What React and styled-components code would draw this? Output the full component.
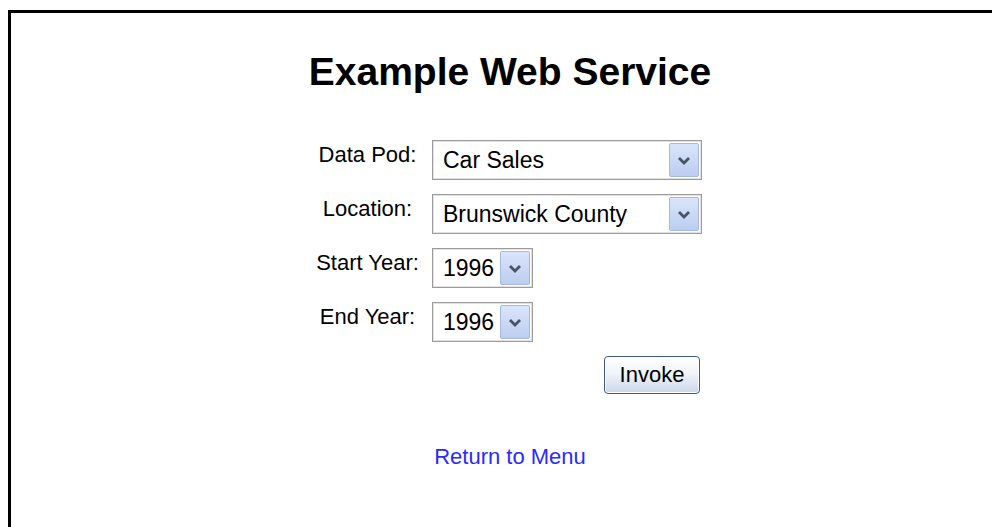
import React from "react";
import styled, { createGlobalStyle } from "styled-components";

const GlobalStyle = createGlobalStyle`
  html, body {
    margin: 0;
    padding: 0;
    background: #ffffff;
    overflow: hidden;
  }
  body {
    font-family: "Liberation Sans", Arial, sans-serif;
    color: #000000;
  }
`;

const Page = styled.div`
  padding: 10px 0 0 8px;
`;

/* the bordered box runs off the right and bottom of the window */
const Frame = styled.div`
  box-sizing: border-box;
  width: 1004px;
  height: 517px;
  border: 3px solid #000000;
  border-bottom: 0;
  display: flex;
  flex-direction: column;
  align-items: center;
`;

const Title = styled.h1`
  margin: 39px 0 0;
  font-size: 39px;
  line-height: 39px;
  font-weight: bold;
`;

const Form = styled.div`
  margin: 49px 8px 0 0;
  display: grid;
  grid-template-columns: 115px 270px;
  column-gap: 7px;
  row-gap: 14px;
  align-items: start;
`;

const Label = styled.div`
  font-size: 22px;
  line-height: 22px;
  padding-top: 4px;
  text-align: center;
`;

const Select = styled.div`
  box-sizing: border-box;
  width: ${(p) => p.$width}px;
  height: 40px;
  border: 1px solid #9c9c9c;
  box-shadow: inset 0 0 0 1px #e2e2e2;
  background: #ffffff;
  display: flex;
  align-items: center;
  padding: 2px 2px 2px 10px;
`;

const Value = styled.span`
  flex: 1;
  font-size: 23px;
  line-height: 23px;
  white-space: nowrap;
`;

const ArrowButton = styled.span`
  box-sizing: border-box;
  width: 30px;
  height: 34px;
  border: 1px solid #a7b9df;
  border-radius: 2px;
  background: linear-gradient(#dae5fb, #bccdf0);
  display: flex;
  align-items: center;
  justify-content: center;
`;

const ButtonCell = styled.div`
  grid-column: 2;
  display: flex;
  justify-content: flex-end;
  padding-right: 2px;
`;

const Button = styled.button`
  box-sizing: border-box;
  width: 96px;
  height: 38px;
  border: 1px solid #3f5a86;
  border-radius: 4px;
  background: linear-gradient(#ffffff 0%, #f1f4f9 45%, #cbd7ea 100%);
  box-shadow: inset 0 0 0 1px #ffffff;
  font-family: "Liberation Sans", Arial, sans-serif;
  font-size: 22px;
  color: #000000;
  padding: 0;
`;

const MenuLink = styled.a`
  margin-top: 52px;
  font-size: 22px;
  line-height: 22px;
  color: #2a2aff;
  text-decoration: none;
`;

function Chevron() {
  return (
    <svg width="14" height="9" viewBox="0 0 14 9">
      <path d="M2 2 L7 7 L12 2" fill="none" stroke="#4a5366" strokeWidth="2.8" />
    </svg>
  );
}

function Dropdown({ value, width }) {
  return (
    <Select $width={width}>
      <Value>{value}</Value>
      <ArrowButton>
        <Chevron />
      </ArrowButton>
    </Select>
  );
}

const fields = [
  { label: "Data Pod:", value: "Car Sales", width: 270 },
  { label: "Location:", value: "Brunswick County", width: 270 },
  { label: "Start Year:", value: "1996", width: 101 },
  { label: "End Year:", value: "1996", width: 101 },
];

export default function App() {
  return (
    <Page>
      <GlobalStyle />
      <Frame>
        <Title>Example Web Service</Title>
        <Form>
          {fields.map((f) => (
            <React.Fragment key={f.label}>
              <Label>{f.label}</Label>
              <Dropdown value={f.value} width={f.width} />
            </React.Fragment>
          ))}
          <ButtonCell>
            <Button>Invoke</Button>
          </ButtonCell>
        </Form>
        <MenuLink href="#">Return to Menu</MenuLink>
      </Frame>
    </Page>
  );
}
